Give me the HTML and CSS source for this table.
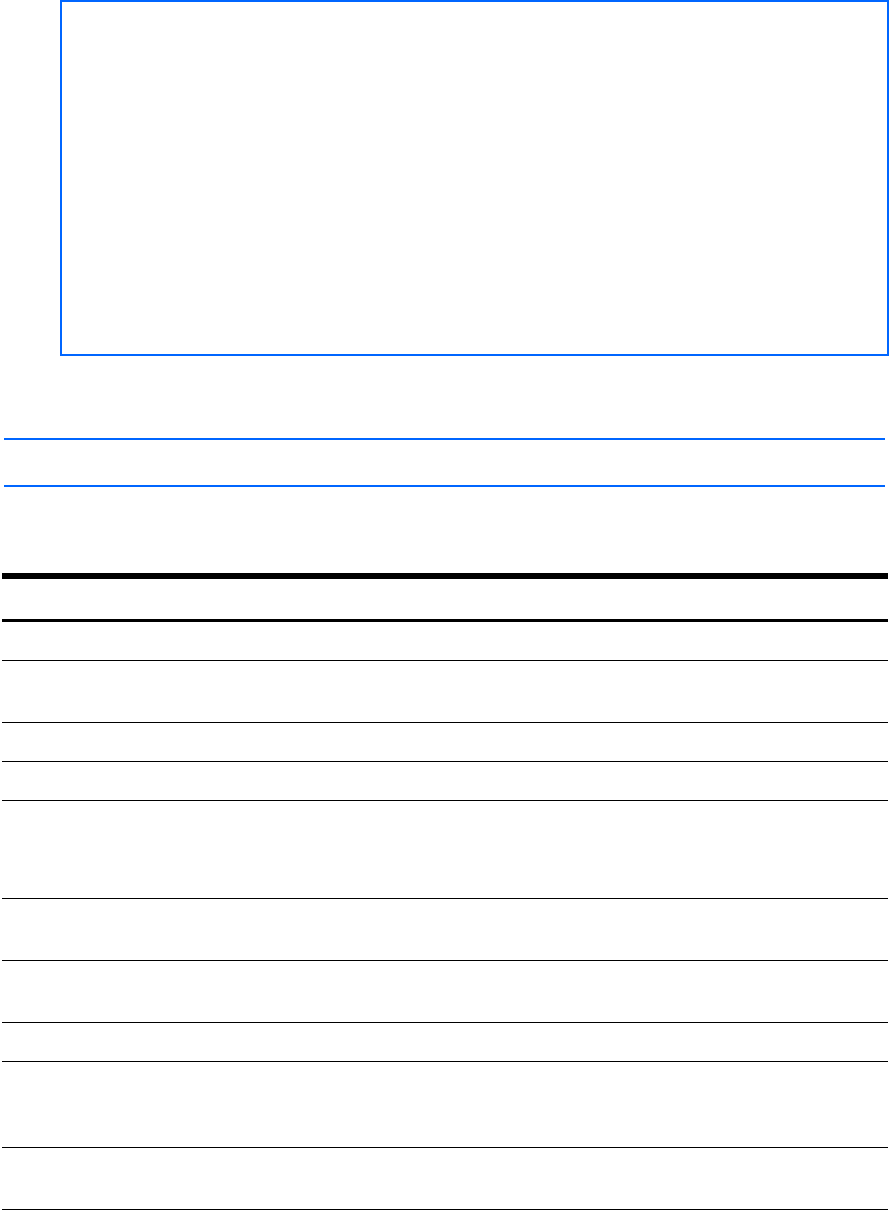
FILE: index.html
```html
<!DOCTYPE html>
<html lang="en">
<head>
<meta charset="utf-8">
<title>Page</title>
<link rel="stylesheet" href="styles.css">
</head>
<body>
<div class="page">
  <div class="frame"></div>
  <div class="band"></div>
  <div class="table">
    <div class="thead"></div>
    <div class="row h38"></div>
    <div class="row h61"></div>
    <div class="row h38"></div>
    <div class="row h38"></div>
    <div class="row h97"></div>
    <div class="row h61"></div>
    <div class="row h61"></div>
    <div class="row h38"></div>
    <div class="row h85"></div>
    <div class="row h61"></div>
  </div>
</div>
</body>
</html>
```
FILE: styles.css
```css
html, body {
  margin: 0;
  padding: 0;
  background: #ffffff;
  font-family: "Liberation Sans", Arial, sans-serif;
}
.page {
  display: flex;
  flex-direction: column;
  width: 890px;
}
.frame {
  margin-left: 60px;
  width: 825px;
  height: 352px;
  border: 2px solid #0066ff;
}
.band {
  margin-top: 82px;
  margin-left: 4px;
  width: 881px;
  height: 45px;
  border-top: 2px solid #0066ff;
  border-bottom: 2px solid #0066ff;
}
.table {
  margin-top: 86px;
  margin-left: 2px;
  width: 886px;
  display: flex;
  flex-direction: column;
}
.thead {
  height: 40px;
  border-top: 6px solid #000000;
  border-bottom: 3px solid #000000;
}
.row {
  border-bottom: 1px solid #000000;
}
.h38 { height: 38px; }
.h61 { height: 61px; }
.h85 { height: 85px; }
.h97 { height: 97px; }
```
